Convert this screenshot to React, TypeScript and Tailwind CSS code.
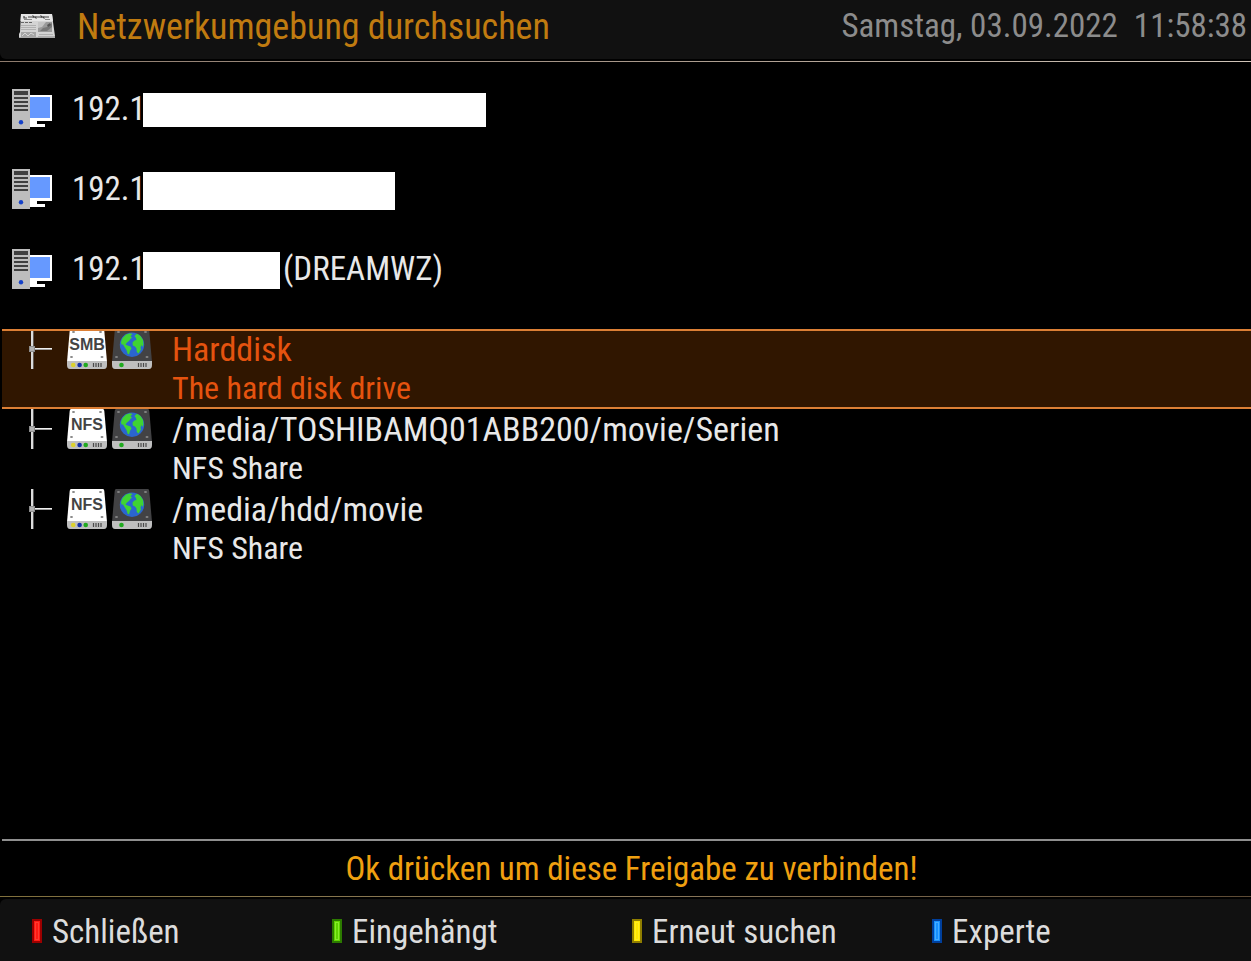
import type { ReactNode } from "react";

function NewspaperIcon() {
  return (
    <svg viewBox="0 0 36 24" className="h-6 w-9 shrink-0" aria-hidden="true">
      <path d="M2 0H33L34 8L36 22L35 24H0V20L1 18Z" fill="#d4d4d4" />
      <path d="M2 0H33L34 7H1.500Z" fill="#e6e6e6" />
      <path d="M5 2V4H8M9 3H13M14 4V2L17 4V2M18 3H21M22 4V2L25 4V2M26 3H30" stroke="#444" strokeWidth="1.200" fill="none" />
      <path d="M5 5.500H13M26 5.500H31" stroke="#8a8a8a" strokeWidth="1" />
      <path d="M2 8.500H14" stroke="#666" strokeWidth="1" strokeDasharray="3 1" />
      <path d="M2 11.500H17M2 13.500H17M2 15.500H17M20 20.500H34M19 22.500H35" stroke="#b0b0b0" strokeWidth="1" />
      <rect x="19" y="8" width="14" height="10" fill="#9a9a9a" />
      <path d="M19 8H27L23 13L19 14Z" fill="#c4c4c4" />
      <path d="M21 17L24 14L28 13L33 9V13L28 17Z" fill="#777" />
      <path d="M28 11L31 9L32 11L29 13Z" fill="#555" />
      <rect x="2" y="18" width="15" height="5" fill="#a6a6a6" />
      <path d="M3 22L6 19L9 22L12 19L15 21" stroke="#d6d6d6" strokeWidth="1" fill="none" />
      <path d="M0 23.500H36" stroke="#aaa" strokeWidth="1" />
    </svg>
  );
}

function ComputerIcon() {
  return (
    <svg viewBox="0 0 40 40" className="size-10 shrink-0" aria-hidden="true">
      <rect x="17" y="6" width="23" height="26" fill="#fff" />
      <rect x="17" y="8" width="21" height="21" fill="#6699ff" />
      <path d="M18 32H25V35H33V38H18Z" fill="#fff" />
      <rect width="18" height="40" fill="#bdbdbd" />
      <path d="M2 2H16V6H2ZM2 8H16V10H2ZM2 12H16V14H2ZM2 16H16V18H2ZM2 20H16V22H2Z" fill="#404040" />
      <circle cx="9" cy="33.300" r="2.200" fill="#1440c8" />
    </svg>
  );
}

function BranchIcon() {
  return (
    <svg viewBox="0 0 40 40" className="size-10 shrink-0" aria-hidden="true">
      <path d="M19 0H21V40H19Z" fill="#dcdcdc" />
      <path d="M21 0H21.700V40H21Z" fill="#777" />
      <path d="M22 19H40V20H22Z" fill="#f0f0f0" />
      <path d="M22 20H40V21H22Z" fill="#a0a0a0" />
      <rect x="17" y="17" width="6" height="6" fill="#8c8c8c" />
      <rect x="18" y="18" width="4" height="4" fill="#b0b0b0" />
    </svg>
  );
}

function DriveScrews() {
  return (
    <g fill="#858585">
      <ellipse cx="6.500" cy="3" rx="1.500" ry="1" />
      <ellipse cx="33.500" cy="3" rx="1.500" ry="1" />
      <ellipse cx="4.500" cy="28" rx="1.500" ry="1" />
      <ellipse cx="35" cy="28" rx="1.500" ry="1" />
    </g>
  );
}

function DriveVents() {
  return <path d="M26.500 34V38M29 34V38M31.500 34V38M34 34V38" stroke="#4a4a4a" strokeWidth="1.200" />;
}

function ShareIcon({ label }: { label: string }) {
  return (
    <svg viewBox="0 0 40 40" className="size-10 shrink-0" role="img" aria-label={label}>
      <path d="M4 0H36Q37 0 37.300 2L40 33H0L2.700 2Q3 0 4 0Z" fill="#fff" />
      <path d="M0 32H40V36Q40 40 37 40H3Q0 40 0 36Z" fill="#bfbfbf" />
      <DriveScrews />
      <text x="20" y="21" textAnchor="middle" fill="#444" className="font-['Liberation_Sans',sans-serif] text-[16px] font-bold">
        {label}
      </text>
      <circle cx="6.200" cy="36" r="2.300" fill="#dcd22c" />
      <circle cx="12.600" cy="36" r="2.300" fill="#1430a8" />
      <circle cx="18.700" cy="36" r="2.300" fill="#1faa1f" />
      <DriveVents />
    </svg>
  );
}

function GlobeDriveIcon() {
  return (
    <svg viewBox="0 0 40 40" className="size-10 shrink-0" aria-hidden="true">
      <path d="M4 0H36Q37 0 37.300 2L40 33H0L2.700 2Q3 0 4 0Z" fill="#424244" />
      <path d="M0 32H40V36Q40 40 37 40H3Q0 40 0 36Z" fill="#bfbfbf" />
      <DriveScrews />
      <circle cx="20" cy="15.700" r="12.200" fill="#2b66cf" />
      <path
        d="M9 13L10.500 9L14 5.500L18 4.200L20.500 5L18.500 7L20 8.500L18.500 10L17 12L15 13.500L13.500 15.500L15.500 16.500L18.500 17.500L19.500 19.500L18 22L17 25.500L15.500 24.500L14.500 21L12.500 18L11 15.500L9.500 15.500Z"
        fill="#3fd333"
      />
      <path
        d="M22.500 7L25 4.800L28.500 7L31 11L31.500 15.500L30.500 18L29.500 16L28.500 18.500L29 20.500L26.500 24.500L24.800 23L24.500 19.500L23 17.500L20.800 16.500L20.500 13.500L22.500 11.500L24.500 11L24 9Z"
        fill="#3fd333"
      />
      <circle cx="9.500" cy="36" r="2.300" fill="#1faa1f" />
      <DriveVents />
    </svg>
  );
}

function HostRow({ children }: { children: ReactNode }) {
  return (
    <li className="flex h-20 items-start pl-[10px]">
      <ComputerIcon />
      <div className="flex h-10 items-start pl-5 text-[33px] leading-[39px]">
        <span className="w-[71px]">192.1</span>
        {children}
      </div>
    </li>
  );
}

type Share = { kind: string; name: string; note: string; selected?: boolean };

const shares: Share[] = [
  { kind: "SMB", name: "Harddisk", note: "The hard disk drive", selected: true },
  { kind: "NFS", name: "/media/TOSHIBAMQ01ABB200/movie/Serien", note: "NFS Share" },
  { kind: "NFS", name: "/media/hdd/movie", note: "NFS Share" },
];

function ShareRow({ kind, name, note, selected }: Share) {
  return (
    <li
      className={
        selected
          ? "relative flex h-20 items-start bg-[#301600] pl-[10px] text-[#e5530f] after:absolute after:inset-0 after:border-y-2 after:border-[#dc7f35]"
          : "flex h-20 items-start pl-[10px]"
      }
    >
      <BranchIcon />
      <div className="flex gap-[5px] pl-[15px]">
        <ShareIcon label={kind} />
        <GlobeDriveIcon />
      </div>
      <div className="pl-5">
        <p className="text-[34px] leading-10">{name}</p>
        <p className="text-[32px] leading-[38px]">{note}</p>
      </div>
    </li>
  );
}

const actions = [
  { label: "Schließen", key: "border-[#9c0000] bg-[#ff1a14]", core: "border-[#ff3a30]" },
  { label: "Eingehängt", key: "border-[#2c7a00] bg-[#5fd400]", core: "border-[#86ee2a]" },
  { label: "Erneut suchen", key: "border-[#8f7d00] bg-[#ffe600]", core: "border-[#ffec20]" },
  { label: "Experte", key: "border-[#003f9c] bg-[#1690ff]", core: "border-[#45acff]" },
];

export default function App() {
  return (
    <div className="flex min-h-screen flex-col bg-black font-['Roboto_Condensed',Roboto,sans-serif] text-[#e8e8e8]">
      <header className="flex h-[59px] items-start justify-between rounded-bl-md bg-[#111] pr-1 pl-[19px]">
        <div className="flex">
          <div className="pt-[14px]">
            <NewspaperIcon />
          </div>
          <h1 className="pt-[7px] pl-[22px] text-[36px] leading-10 text-[#c07b10]">Netzwerkumgebung durchsuchen</h1>
        </div>
        <time className="flex gap-4 pt-[6px] text-[33px] leading-[39px] text-[#8c8c8c]">
          <span>Samstag, 03.09.2022</span>
          <span>11:58:38</span>
        </time>
      </header>
      <div className="mt-[2px] h-px bg-linear-to-r from-[#8d7a6c] via-[#a8988a] to-[#d0c4b8]" />

      <main className="ml-[2px] flex flex-1 flex-col">
        <ul className="flex-1 pt-[27px]">
          <HostRow>
            <span className="mt-1 h-[34px] w-[343px] bg-white" />
          </HostRow>
          <HostRow>
            <span className="mt-[3px] h-[38px] w-[252px] bg-white" />
          </HostRow>
          <HostRow>
            <span className="mt-[3px] h-[37px] w-[137px] bg-white" />
            <span className="pl-[3px]">(DREAMWZ)</span>
          </HostRow>
          {shares.map((share) => (
            <ShareRow key={share.name} {...share} />
          ))}
        </ul>
        <p className="h-[57px] border-t-2 border-[#8f8f8f] pt-2 pl-[10px] text-center text-[33px] leading-[39px] text-[#f0a010]">
          Ok drücken um diese Freigabe zu verbinden!
        </p>
      </main>

      <div className="h-px bg-linear-to-r from-[#80703c] via-[#8d7a5c] to-[#5c4a34]" />
      <footer className="mt-[2px] flex h-[62px] rounded-tl-md bg-[#111] pl-8 text-[#dcdcdc]">
        {actions.map((action) => (
          <button key={action.label} type="button" className="flex w-[300px] items-start pt-[13px] text-left text-[33px] leading-[39px]">
            <span className={`mt-[7px] mr-[10px] h-6 w-[10px] border-2 p-px ${action.key}`}>
              <span className={`block h-full border ${action.core}`} />
            </span>
            {action.label}
          </button>
        ))}
      </footer>
    </div>
  );
}
